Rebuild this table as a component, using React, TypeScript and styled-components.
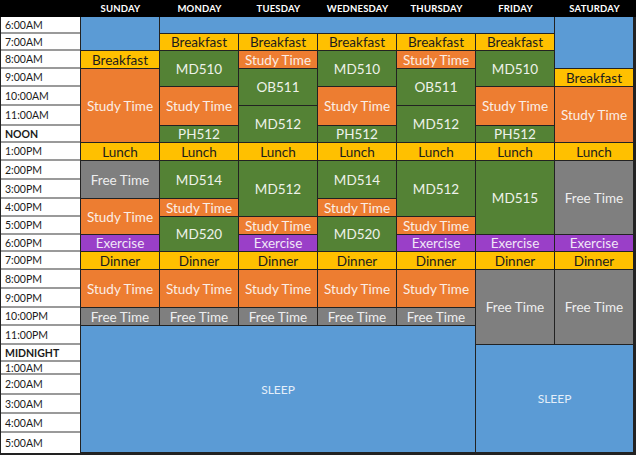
import * as React from 'react';
import styled, { createGlobalStyle } from 'styled-components';

// weekly study schedule, laid out like a spreadsheet with merged cells

type Kind = 'sleep' | 'meal' | 'study' | 'class' | 'free' | 'exercise';

const colors: Record<Kind, { bg: string; fg: string }> = {
  sleep: { bg: '#5b9bd5', fg: '#e4eef9' },
  meal: { bg: '#ffc000', fg: '#1c1c1c' },
  study: { bg: '#ed7d31', fg: '#fbeee6' },
  class: { bg: '#548235', fg: '#eef2ea' },
  free: { bg: '#7f7f7f', fg: '#eeeeee' },
  exercise: { bg: '#9a3fc8', fg: '#f1e6f7' },
};

const days = ['SUNDAY', 'MONDAY', 'TUESDAY', 'WEDNESDAY', 'THURSDAY', 'FRIDAY', 'SATURDAY'];

const slots = [
  '6:00AM', '7:00AM', '8:00AM', '9:00AM', '10:00AM', '11:00AM', 'NOON',
  '1:00PM', '2:00PM', '3:00PM', '4:00PM', '5:00PM', '6:00PM', '7:00PM',
  '8:00PM', '9:00PM', '10:00PM', '11:00PM', 'MIDNIGHT',
  '1:00AM', '2:00AM', '3:00AM', '4:00AM', '5:00AM',
];

const rowHeights = [17, 17, 18, 18, 19, 20, 17, 18, 19, 19, 18, 18, 17, 18, 19, 19, 18, 19, 17, 13, 20, 19, 19, 20];

// [day, daySpan, slot, slotSpan, kind, label]
type Block = [number, number, number, number, Kind, string];

const mondayLike = (d: number): Block[] => [
  [d, 1, 1, 1, 'meal', 'Breakfast'],
  [d, 1, 2, 2, 'class', 'MD510'],
  [d, 1, 4, 2, 'study', 'Study Time'],
  [d, 1, 6, 1, 'class', 'PH512'],
  [d, 1, 7, 1, 'meal', 'Lunch'],
  [d, 1, 8, 2, 'class', 'MD514'],
  [d, 1, 10, 1, 'study', 'Study Time'],
  [d, 1, 11, 2, 'class', 'MD520'],
  [d, 1, 13, 1, 'meal', 'Dinner'],
  [d, 1, 14, 2, 'study', 'Study Time'],
  [d, 1, 16, 1, 'free', 'Free Time'],
];

const tuesdayLike = (d: number): Block[] => [
  [d, 1, 1, 1, 'meal', 'Breakfast'],
  [d, 1, 2, 1, 'study', 'Study Time'],
  [d, 1, 3, 2, 'class', 'OB511'],
  [d, 1, 5, 2, 'class', 'MD512'],
  [d, 1, 7, 1, 'meal', 'Lunch'],
  [d, 1, 8, 3, 'class', 'MD512'],
  [d, 1, 11, 1, 'study', 'Study Time'],
  [d, 1, 12, 1, 'exercise', 'Exercise'],
  [d, 1, 13, 1, 'meal', 'Dinner'],
  [d, 1, 14, 2, 'study', 'Study Time'],
  [d, 1, 16, 1, 'free', 'Free Time'],
];

const blocks: Block[] = [
  // sunday
  [0, 1, 0, 2, 'sleep', ''],
  [0, 1, 2, 1, 'meal', 'Breakfast'],
  [0, 1, 3, 4, 'study', 'Study Time'],
  [0, 1, 7, 1, 'meal', 'Lunch'],
  [0, 1, 8, 2, 'free', 'Free Time'],
  [0, 1, 10, 2, 'study', 'Study Time'],
  [0, 1, 12, 1, 'exercise', 'Exercise'],
  [0, 1, 13, 1, 'meal', 'Dinner'],
  [0, 1, 14, 2, 'study', 'Study Time'],
  [0, 1, 16, 1, 'free', 'Free Time'],
  // weekday mornings
  [1, 5, 0, 1, 'sleep', ''],
  ...mondayLike(1),
  ...tuesdayLike(2),
  ...mondayLike(3),
  ...tuesdayLike(4),
  // friday
  [5, 1, 1, 1, 'meal', 'Breakfast'],
  [5, 1, 2, 2, 'class', 'MD510'],
  [5, 1, 4, 2, 'study', 'Study Time'],
  [5, 1, 6, 1, 'class', 'PH512'],
  [5, 1, 7, 1, 'meal', 'Lunch'],
  [5, 1, 8, 4, 'class', 'MD515'],
  [5, 1, 12, 1, 'exercise', 'Exercise'],
  [5, 1, 13, 1, 'meal', 'Dinner'],
  [5, 1, 14, 4, 'free', 'Free Time'],
  // saturday
  [6, 1, 0, 3, 'sleep', ''],
  [6, 1, 3, 1, 'meal', 'Breakfast'],
  [6, 1, 4, 3, 'study', 'Study Time'],
  [6, 1, 7, 1, 'meal', 'Lunch'],
  [6, 1, 8, 4, 'free', 'Free Time'],
  [6, 1, 12, 1, 'exercise', 'Exercise'],
  [6, 1, 13, 1, 'meal', 'Dinner'],
  [6, 1, 14, 4, 'free', 'Free Time'],
  // nights
  [0, 5, 17, 7, 'sleep', 'SLEEP'],
  [5, 2, 18, 6, 'sleep', 'SLEEP'],
];

const GlobalStyle = createGlobalStyle`
  html, body {
    margin: 0;
    padding: 0;
    background: #ffffff;
  }
`;

const Sheet = styled.div`
  display: grid;
  grid-template-columns: 80px repeat(7, 79px);
  grid-template-rows: 17px ${rowHeights.map((h) => `${h}px`).join(' ')};
  width: 636px;
  height: 455px;
  box-sizing: border-box;
  padding: 0 2px 2px 1px;
  background: #222222;
  font-family: Lato, 'Open Sans', sans-serif;
`;

const HeaderBar = styled.div`
  grid-column: 1 / -1;
  grid-row: 1;
  margin-left: -1px;
  margin-right: -2px;
  background: #000000;
`;

const DayHead = styled.div<{ $col: number }>`
  grid-column: ${({ $col }) => $col};
  grid-row: 1;
  z-index: 1;
  display: flex;
  align-items: center;
  justify-content: center;
  color: #ffffff;
  font-size: 9.5px;
  font-weight: 700;
  letter-spacing: 0.2px;
`;

const TimeCell = styled.div<{ $row: number; $strong: boolean; $last: boolean }>`
  grid-column: 1;
  grid-row: ${({ $row }) => $row};
  margin-right: 1px;
  display: flex;
  align-items: center;
  padding-left: 4px;
  box-sizing: border-box;
  background: #ffffff;
  border-bottom: ${({ $last }) => ($last ? '0' : '2px solid #9a9a9a')};
  color: #1a1a1a;
  font-size: 10.5px;
  font-weight: ${({ $strong }) => ($strong ? 700 : 400)};
`;

const Event = styled.div<{ $col: number; $cs: number; $row: number; $rs: number; $kind: Kind }>`
  grid-column: ${({ $col, $cs }) => `${$col} / span ${$cs}`};
  grid-row: ${({ $row, $rs }) => `${$row} / span ${$rs}`};
  margin: 0 1px 1px 0;
  display: flex;
  align-items: center;
  justify-content: center;
  overflow: hidden;
  white-space: nowrap;
  background: ${({ $kind }) => colors[$kind].bg};
  color: ${({ $kind }) => colors[$kind].fg};
  font-size: ${({ $kind }) => ($kind === 'sleep' ? '12px' : '13.5px')};
`;

export default function App() {
  return (
    <>
      <GlobalStyle />
      <Sheet>
        <HeaderBar />
        {days.map((d, i) => (
          <DayHead key={d} $col={i + 2}>{d}</DayHead>
        ))}
        {slots.map((s, i) => (
          <TimeCell
            key={s}
            $row={i + 2}
            $strong={s === 'NOON' || s === 'MIDNIGHT'}
            $last={i === slots.length - 1}
          >
            {s}
          </TimeCell>
        ))}
        {blocks.map(([day, ds, slot, ss, kind, label], i) => (
          <Event key={i} $col={day + 2} $cs={ds} $row={slot + 2} $rs={ss} $kind={kind}>
            {label}
          </Event>
        ))}
      </Sheet>
    </>
  );
}
